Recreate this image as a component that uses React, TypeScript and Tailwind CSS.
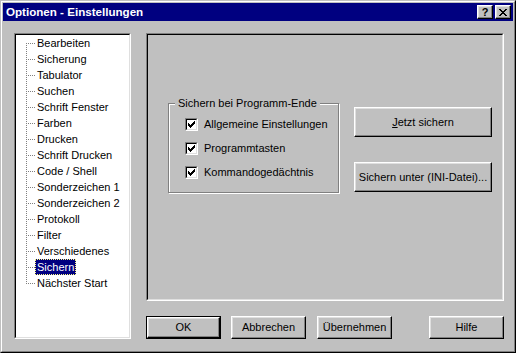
import React from "react";

// Win98 "Optionen - Einstellungen" property dialog

const ITEMS = [
  "Bearbeiten",
  "Sicherung",
  "Tabulator",
  "Suchen",
  "Schrift Fenster",
  "Farben",
  "Drucken",
  "Schrift Drucken",
  "Code / Shell",
  "Sonderzeichen 1",
  "Sonderzeichen 2",
  "Protokoll",
  "Filter",
  "Verschiedenes",
  "Sichern",
  "Nächster Start",
];

const CHECK = [
  "......X",
  ".....XX",
  "X...XXX",
  "XX.XXX.",
  "XXXXX..",
  ".XXX...",
  "..X....",
];

const CLOSE = [
  "XX....XX",
  ".XX..XX.",
  "..XXXX..",
  "...XX...",
  "..XXXX..",
  ".XX..XX.",
  "XX....XX",
];

function Pixels({ rows, color }: { rows: string[]; color: string }) {
  return (
    <svg width={rows[0].length} height={rows.length} shapeRendering="crispEdges" className="block">
      {rows.flatMap((r, y) =>
        r.split("").map((c, x) =>
          c === "X" ? <rect key={`${x}-${y}`} x={x} y={y} width={1} height={1} fill={color} /> : null
        )
      )}
    </svg>
  );
}

const raised =
  "border border-t-white border-l-white border-r-black border-b-black bg-[#c0c0c0] shadow-[inset_-1px_-1px_0_#808080,inset_1px_1px_0_#dfdfdf]";

function Sunken({ className, children }: { className: string; children?: React.ReactNode }) {
  return (
    <div className={`border border-t-[#808080] border-l-[#808080] border-r-white border-b-white ${className}`}>
      <div className="h-full w-full border border-t-black border-l-black border-r-[#dfdfdf] border-b-[#dfdfdf]">
        {children}
      </div>
    </div>
  );
}

function Checkbox({ label }: { label: string }) {
  return (
    <div className="flex h-[24px] items-center gap-[6px]">
      <div className="h-[13px] w-[13px] border border-t-[#808080] border-l-[#808080] border-r-white border-b-white">
        <div className="h-full w-full border border-t-black border-l-black border-r-[#dfdfdf] border-b-[#dfdfdf] bg-white p-[1px]">
          <Pixels rows={CHECK} color="#000" />
        </div>
      </div>
      <span>{label}</span>
    </div>
  );
}

function TreeRow({ label, first, last, selected }: { label: string; first: boolean; last: boolean; selected: boolean }) {
  return (
    <div className="flex h-[16px] items-stretch">
      <svg width={9} height={16} className="ml-[10px] block shrink-0">
        <line x1={0.5} y1={first ? 8 : 0} x2={0.5} y2={last ? 9 : 16} stroke="#808080" strokeDasharray="1 1" />
        <line x1={2} y1={8.5} x2={9} y2={8.5} stroke="#808080" strokeDasharray="1 1" />
      </svg>
      {selected ? (
        <span className="border border-dotted border-[#ffff80] bg-[#000080] px-[1px] leading-[14px] text-white">{label}</span>
      ) : (
        <span className="px-[2px] leading-[16px]">{label}</span>
      )}
    </div>
  );
}

export default function App() {
  return (
    <div className="h-[353px] w-[516px] border border-t-[#c0c0c0] border-l-[#c0c0c0] border-r-black border-b-black bg-[#c0c0c0] font-['Liberation_Sans',Arial,sans-serif] text-[11px] text-black">
      <div className="flex h-full w-full flex-col border border-t-white border-l-white border-r-[#808080] border-b-[#808080] p-[1px]">
        {/* title bar */}
        <div className="flex h-[18px] shrink-0 items-center bg-[#000080] pl-[3px] pr-[2px]">
          <span className="text-[11.6px] font-bold text-white">Optionen - Einstellungen</span>
          <div className={`ml-auto flex h-[14px] w-[16px] items-center justify-center ${raised}`}>
            <span className="text-[11px] font-bold leading-none">?</span>
          </div>
          <div className={`ml-[2px] flex h-[14px] w-[16px] items-center justify-center ${raised}`}>
            <Pixels rows={CLOSE} color="#000" />
          </div>
        </div>

        {/* body */}
        <div className="flex pl-[11px] pt-[12px]">
          <Sunken className="h-[306px] w-[117px] shrink-0">
            <div className="h-full bg-white">
              {ITEMS.map((label, i) => (
                <TreeRow
                  key={label}
                  label={label}
                  first={i === 0}
                  last={i === ITEMS.length - 1}
                  selected={label === "Sichern"}
                />
              ))}
            </div>
          </Sunken>

          <div className="ml-[15px] flex w-[358px] flex-col">
            <Sunken className="h-[268px] w-[358px]">
              <div className="flex items-start">
                <div className="relative ml-[20px] mt-[68px] h-[90px] w-[171px] shrink-0 border border-[#808080] pl-[16px] pt-[8px] shadow-[1px_1px_0_#fff,inset_1px_1px_0_#fff]">
                  <span className="absolute left-[6px] top-[-8px] bg-[#c0c0c0] px-[3px] leading-[14px]">
                    Sichern bei Programm-Ende
                  </span>
                  <Checkbox label="Allgemeine Einstellungen" />
                  <Checkbox label="Programmtasten" />
                  <Checkbox label="Kommandogedächtnis" />
                </div>
                <div className="ml-[15px] mt-[72px] flex flex-col gap-[25px]">
                  <div className={`flex h-[30px] w-[138px] items-center justify-center ${raised}`}>
                    <span>
                      <span className="underline">J</span>etzt sichern
                    </span>
                  </div>
                  <div className={`flex h-[30px] w-[138px] items-center justify-center ${raised}`}>
                    Sichern unter (INI-Datei)...
                  </div>
                </div>
              </div>
            </Sunken>

            <div className="mt-[15px] flex h-[23px]">
              <div className="h-[23px] w-[75px] border border-black">
                <div className={`flex h-full w-full items-center justify-center ${raised}`}>OK</div>
              </div>
              <div className={`ml-[10px] flex h-[23px] w-[75px] items-center justify-center ${raised}`}>Abbrechen</div>
              <div className={`ml-[11px] flex h-[23px] w-[75px] items-center justify-center ${raised}`}>Übernehmen</div>
              <div className={`ml-auto flex h-[23px] w-[75px] items-center justify-center ${raised}`}>Hilfe</div>
            </div>
          </div>
        </div>
      </div>
    </div>
  );
}
